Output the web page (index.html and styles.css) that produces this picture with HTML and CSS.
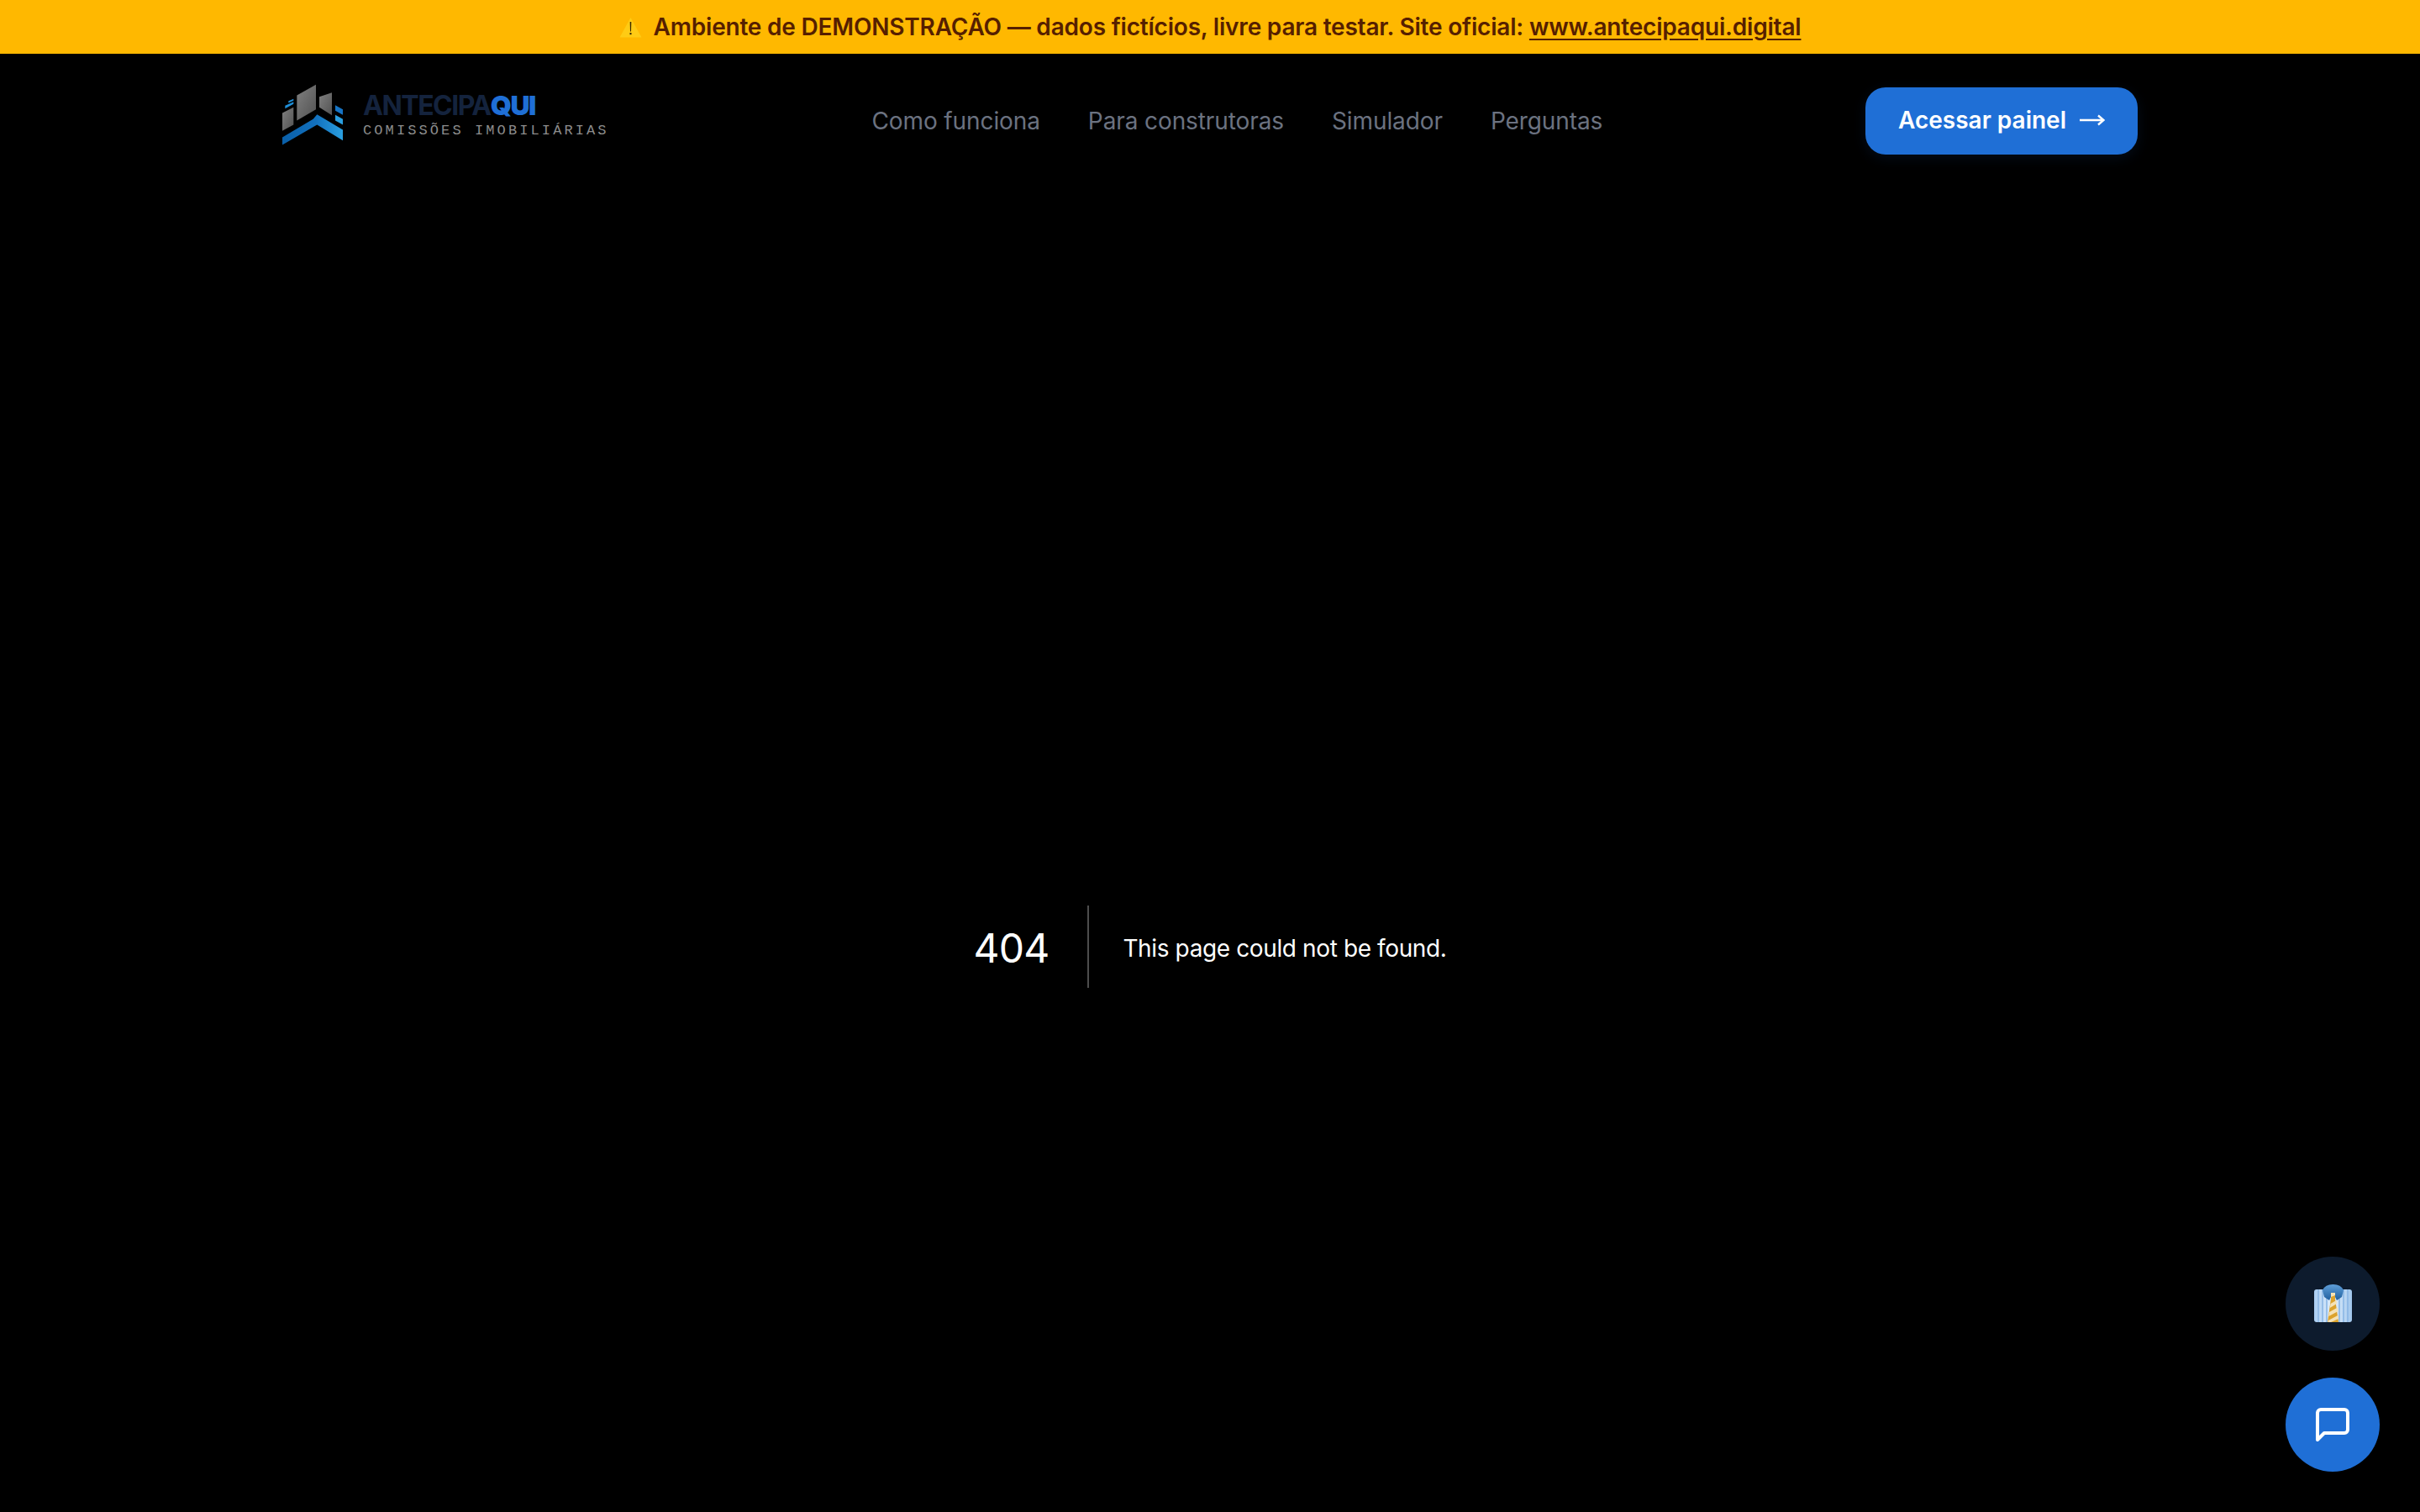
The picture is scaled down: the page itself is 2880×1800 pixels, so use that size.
FILE: index.html
```html
<!DOCTYPE html>
<html lang="pt-BR">
<head>
  <meta charset="UTF-8" />
  <title>AntecipaQui</title>
  <link rel="stylesheet" href="styles.css">
</head>
<body>
  <div class="demo-banner">
    <svg class="warn-icon" viewBox="0 0 27 25" width="27" height="25" aria-hidden="true">
      <path d="M13.5 1 26.5 24.5H.5z" fill="#ffcb14"/>
      <path d="M12.7 6h1.6l-.3 11.500h-1z" fill="#3a2a00"/>
      <rect x="12.500" y="19" width="2" height="2.200" fill="#3a2a00"/>
    </svg>
    <span>Ambiente de DEMONSTRAÇÃO — dados fictícios, livre para testar. Site oficial: <a href="#">www.antecipaqui.digital</a></span>
  </div>

  <header class="site-header">
    <div class="container">
      <a class="logo" href="#">
        <svg class="logo-mark" viewBox="108 95 216 218" width="72" height="73" aria-hidden="true">
          <defs>
            <linearGradient id="roof-fill" x1="0" y1="0" x2="1" y2="0">
              <stop offset="0" stop-color="#0a5fa8"/>
              <stop offset="0.55" stop-color="#1270bd"/>
              <stop offset="1" stop-color="#2a9fe0"/>
            </linearGradient>
            <linearGradient id="tower-fill" x1="0" y1="0" x2="1" y2="1">
              <stop offset="0" stop-color="#808080"/>
              <stop offset="1" stop-color="#525252"/>
            </linearGradient>
          </defs>
          <path d="M108 198 148 178V240L108 262z" fill="url(#tower-fill)"/>
          <path d="M160 135 228 97V185L160 225z" fill="url(#tower-fill)"/>
          <path d="M240 140 285 125V206L240 178z" fill="url(#tower-fill)"/>
          <path d="M118 172 148 158V166L118 182z" fill="#1f8fd8"/>
          <path d="M130 155 148 148V154L130 162z" fill="#1f8fd8"/>
          <path d="M297 170 324 185V205L297 190z" fill="#1674c4"/>
          <path d="M297 205 324 220V240L297 225z" fill="#2a9fe0"/>
          <path d="M108 285 218 220 232 203 324 258V296L232 240 108 312z" fill="url(#roof-fill)"/>
        </svg>
        <span class="logo-text">
          <span class="logo-name">ANTECIPA<b>QUI</b></span>
          <span class="logo-tag">COMISSÕES IMOBILIÁRIAS</span>
        </span>
      </a>

      <nav class="main-nav">
        <a href="#">Como funciona</a>
        <a href="#">Para construtoras</a>
        <a href="#">Simulador</a>
        <a href="#">Perguntas</a>
      </nav>

      <a class="btn-panel" href="#">
        Acessar painel
        <svg viewBox="0 0 30 16" width="30" height="16" aria-hidden="true">
          <path d="M0 8H28M22 2.500 28.500 8 22 13.500" fill="none" stroke="#fff" stroke-width="2.400"/>
        </svg>
      </a>
    </div>
  </header>

  <main class="error-page">
    <h1>404</h1>
    <h2>This page could not be found.</h2>
  </main>

  <div class="float-actions">
    <button class="float-btn float-dark" type="button" title="Consultor">
      <svg viewBox="0 0 45 46" width="45" height="46" aria-hidden="true">
        <defs>
          <linearGradient id="shirt-fill" x1="0" y1="0" x2="1" y2="0">
            <stop offset="0" stop-color="#a9cdf2"/>
            <stop offset="0.5" stop-color="#e3f0fc"/>
            <stop offset="1" stop-color="#a0c6ec"/>
          </linearGradient>
          <linearGradient id="collar-fill" x1="0" y1="0" x2="0" y2="1">
            <stop offset="0" stop-color="#5f9fd8"/>
            <stop offset="1" stop-color="#1f5f9f"/>
          </linearGradient>
        </defs>
        <rect y="6" width="45" height="39" rx="3" fill="url(#shirt-fill)"/>
        <path d="M5 6V45M10 6V45M15 6V45M30 6V45M35 6V45M40 6V45" stroke="#86b4e4" stroke-width="1.500"/>
        <path d="M10 7Q13 0 22.500 0T35 7L33 15 27 19 22.500 10 18 19 12 15z" fill="url(#collar-fill)"/>
        <path d="M20 10H25L25 17 29 45H16L20 17z" fill="#dca32c"/>
        <path d="M20 10H25L25 13 20 15zM19.500 23 26.500 19 27 23 18.800 28zM18 33 28 27.500 28.600 32 17.300 38zM16.800 43 29 36.500 29 41 20 45H16.500z" fill="#f4e2b6"/>
      </svg>
    </button>
    <button class="float-btn float-blue" type="button" title="Chat">
      <svg viewBox="0 0 24 24" width="48" height="48" fill="none" stroke="#fff" stroke-width="2" stroke-linecap="round" stroke-linejoin="round" aria-hidden="true">
        <path d="M21 15a2 2 0 0 1-2 2H7l-4 4V5a2 2 0 0 1 2-2h14a2 2 0 0 1 2 2z"/>
      </svg>
    </button>
  </div>
</body>
</html>
```

FILE: styles.css
```css
* {
  box-sizing: border-box;
}

body {
  margin: 0;
  background-color: #000;
  color: #fff;
  font-family: Inter, "Liberation Sans", sans-serif;
  overflow: hidden;
}

a {
  color: inherit;
  text-decoration: none;
}

.demo-banner {
  height: 64px;
  display: flex;
  align-items: center;
  justify-content: center;
  gap: 14px;
  background-color: #ffb800;
  color: #561f00;
  font-size: 28px;
  font-weight: 600;
  letter-spacing: -0.2px;
}

.demo-banner a {
  text-decoration: underline;
  text-underline-offset: 4px;
}

.site-header {
  height: 160px;
}

.container {
  width: 2208px;
  height: 100%;
  margin: 0 auto;
  display: flex;
  align-items: center;
  justify-content: space-between;
}

.logo {
  display: flex;
  align-items: center;
  gap: 24px;
  padding-bottom: 15px;
}

.logo-text {
  display: flex;
  flex-direction: column;
  gap: 2px;
}

.logo-name {
  font-size: 32px;
  line-height: 36px;
  font-weight: 700;
  letter-spacing: -1.5px;
  color: #14233d;
}

.logo-name b {
  color: #1f6fd6;
}

.logo-tag {
  font-family: "Liberation Mono", monospace;
  font-size: 17px;
  line-height: 20px;
  letter-spacing: 3.1px;
  color: #8c8c8c;
}

.main-nav {
  display: flex;
  gap: 57px;
  font-size: 28px;
  letter-spacing: -0.1px;
  color: #6b7280;
}

.btn-panel {
  width: 324px;
  height: 80px;
  padding-bottom: 2px;
  display: flex;
  align-items: center;
  justify-content: center;
  gap: 16px;
  border-radius: 24px;
  background-color: #1f6fd6;
  box-shadow: 0 4px 16px rgba(31, 111, 214, 0.12);
  color: #fff;
  font-size: 28px;
  font-weight: 600;
}

.error-page {
  height: calc(100vh - 224px);
  padding-top: 230px;
  display: flex;
  align-items: center;
  justify-content: center;
}

.error-page h1 {
  margin: 0 40px 0 0;
  padding: 4px 46px 0 0;
  border-right: 2px solid rgba(255, 255, 255, 0.3);
  font-size: 48px;
  line-height: 94px;
  font-weight: 400;
  letter-spacing: -0.8px;
}

.error-page h2 {
  margin: 0;
  padding-top: 3px;
  font-size: 28px;
  line-height: 56px;
  font-weight: 400;
  letter-spacing: -0.38px;
}

.float-actions {
  position: fixed;
  right: 48px;
  bottom: 48px;
  display: flex;
  flex-direction: column;
  gap: 32px;
}

.float-btn {
  width: 112px;
  height: 112px;
  padding: 0;
  display: flex;
  align-items: center;
  justify-content: center;
  border: 0;
  border-radius: 50%;
  cursor: pointer;
}

.float-dark {
  background-color: #0d1b2d;
}

.float-blue {
  background-color: #1f6fd6;
}
```
